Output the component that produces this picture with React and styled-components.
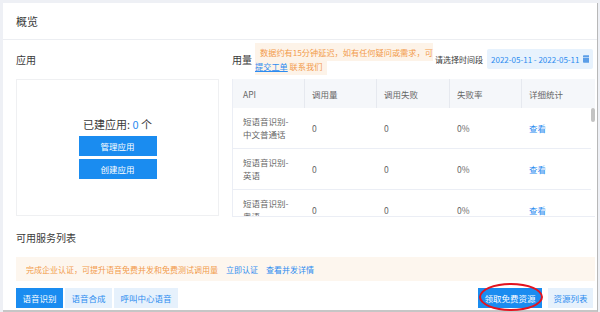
import React from "react";
import styled, { createGlobalStyle, css } from "styled-components";

const rows = [
  { api: "短语音识别-中文普通话", calls: 0, fails: 0, rate: "0%" },
  { api: "短语音识别-英语", calls: 0, fails: 0, rate: "0%" },
  { api: "短语音识别-粤语", calls: 0, fails: 0, rate: "0%" }
];

const tabs = ["语音识别", "语音合成", "呼叫中心语音"];

export default function App() {
  return (
    <Page>
      <GlobalStyle />
      <Card>
        <Header>概览</Header>
        <Body>
          <TopGrid>
            <Column>
              <ColumnHead>
                <SectionTitle>应用</SectionTitle>
              </ColumnHead>
              <AppBox>
                <CountText>
                  已建应用: <Num>0</Num> 个
                </CountText>
                <PrimaryButton>管理应用</PrimaryButton>
                <PrimaryButton>创建应用</PrimaryButton>
              </AppBox>
            </Column>
            <Column>
              <ColumnHead>
                <SectionTitle>用量</SectionTitle>
                <NoticeWrap>
                  <Notice>
                    数据约有15分钟延迟，如有任何疑问或需求，可
                    <NoticeLink>提交工单</NoticeLink> 联系我们
                  </Notice>
                </NoticeWrap>
                <Spacer />
                <PickLabel>请选择时间段</PickLabel>
                <DateBox>
                  2022-05-11 - 2022-05-11
                  <CalendarIcon viewBox="0 0 7 8">
                    <rect x="0" y="0" width="7" height="8" rx="0.8" fill="#5b9ee8" />
                    <rect x="0" y="2" width="7" height="0.8" fill="#cfe3f8" />
                  </CalendarIcon>
                </DateBox>
              </ColumnHead>
              <TableWrap>
                <TableHead>
                  <HeadCell first>API</HeadCell>
                  <HeadCell>调用量</HeadCell>
                  <HeadCell>调用失败</HeadCell>
                  <HeadCell>失败率</HeadCell>
                  <HeadCell last>详细统计</HeadCell>
                </TableHead>
                <TableBody>
                  {rows.map((r, i) => (
                    <Row key={i}>
                      <Cell first>{r.api}</Cell>
                      <Cell>{r.calls}</Cell>
                      <Cell>{r.fails}</Cell>
                      <Cell>{r.rate}</Cell>
                      <Cell>
                        <Link>查看</Link>
                      </Cell>
                    </Row>
                  ))}
                </TableBody>
                <ScrollThumb />
              </TableWrap>
            </Column>
          </TopGrid>

          <ServicesTitle>可用服务列表</ServicesTitle>
          <Banner>
            完成企业认证，可提升语音免费并发和免费测试调用量
            <BannerLink>立即认证</BannerLink>
            <BannerLink>查看并发详情</BannerLink>
          </Banner>

          <TabRow>
            <Tabs>
              {tabs.map((t, i) => (
                <Tab key={t} active={i === 0}>
                  {t}
                </Tab>
              ))}
            </Tabs>
            <Actions>
              <Highlighted>
                <Tab active>领取免费资源</Tab>
                <RedRing />
              </Highlighted>
              <Tab narrow>资源列表</Tab>
            </Actions>
          </TabRow>
        </Body>
      </Card>
    </Page>
  );
}

const GlobalStyle = createGlobalStyle`
  html, body {
    margin: 0;
    padding: 0;
    background: #eef0f5;
  }
  body {
    font-family: "Noto Sans CJK SC", "Noto Sans", sans-serif;
    color: #333;
  }
`;

const Page = styled.div`
  width: 600px;
  height: 312px;
  padding: 3px 0 0 3px;
  box-sizing: border-box;
  overflow: hidden;
`;

const Card = styled.div`
  width: 594px;
  height: 307px;
  background: #fff;
  border-right: 1px solid #b8b8b8;
  border-bottom: 2px solid #c6c6c6;
  display: flex;
  flex-direction: column;
`;

const Header = styled.div`
  height: 36px;
  line-height: 36px;
  padding-left: 13px;
  font-size: 11px;
  color: #3a3a3a;
  border-bottom: 1px solid #eceef2;
`;

const Body = styled.div`
  padding: 0 2px 0 13px;
  display: flex;
  flex-direction: column;
`;

const TopGrid = styled.div`
  display: grid;
  grid-template-columns: 203px 1fr;
  column-gap: 13px;
  padding-top: 1px;
`;

const Column = styled.div`
  display: flex;
  flex-direction: column;
  min-width: 0;
`;

const ColumnHead = styled.div`
  height: 36px;
  margin-bottom: 2px;
  display: flex;
  align-items: center;
`;

const SectionTitle = styled.div`
  font-size: 10px;
  color: #3a3a3a;
  white-space: nowrap;
`;

const AppBox = styled.div`
  height: 137px;
  box-sizing: border-box;
  border: 1px solid #eff0f2;
  display: flex;
  flex-direction: column;
  align-items: center;
  justify-content: center;
`;

const CountText = styled.div`
  font-size: 11px;
  line-height: 14px;
  color: #3a3a3a;
  margin-bottom: 5px;
`;

const Num = styled.span`
  color: #2d8cf0;
`;

const PrimaryButton = styled.div`
  width: 78px;
  height: 20px;
  line-height: 20px;
  text-align: center;
  background: #1a8cf0;
  color: #fff;
  font-size: 8.5px;
  & + & {
    margin-top: 3px;
  }
`;

const NoticeWrap = styled.div`
  width: 180px;
  margin-left: 3px;
  font-size: 8.2px;
  line-height: 14px;
`;

const Notice = styled.span`
  background: #fdf3e8;
  color: #f29b4c;
  padding: 3px 5px;
`;

const NoticeLink = styled.span`
  color: #2d8cf0;
  text-decoration: underline;
`;

const Spacer = styled.div`
  flex: 1;
`;

const PickLabel = styled.div`
  font-size: 8px;
  color: #3a3a3a;
  margin-right: 4px;
  white-space: nowrap;
`;

const DateBox = styled.div`
  width: 106px;
  height: 20px;
  margin-right: 2px;
  box-sizing: border-box;
  padding: 0 4px;
  background: #e7f2fd;
  border-radius: 2px;
  color: #2d8cf0;
  font-size: 8px;
  display: flex;
  align-items: center;
  justify-content: space-between;
  white-space: nowrap;
`;

const CalendarIcon = styled.svg`
  width: 7px;
  height: 8px;
  margin-left: 3px;
`;

const TableWrap = styled.div`
  position: relative;
  height: 138px;
  overflow: hidden;
  border-left: 1px solid #ebeef5;
  border-bottom: 1px solid #ebeef5;
  box-sizing: border-box;
`;

const columns = css`
  display: grid;
  grid-template-columns: 72px 72px 73px 72px 1fr;
`;

const TableHead = styled.div`
  ${columns};
  height: 29px;
  background: #f5f7fa;
`;

const HeadCell = styled.div`
  display: flex;
  align-items: center;
  padding-left: ${p => (p.first ? "10px" : "7px")};
  font-size: 8.5px;
  color: #666;
  border-right: ${p => (p.last ? "none" : "1px solid #e6e9ef")};
`;

const TableBody = styled.div`
  margin-right: 4px;
`;

const Row = styled.div`
  ${columns};
  height: 41px;
  border-bottom: 1px solid #ebeef5;
  box-sizing: border-box;
`;

const Cell = styled.div`
  display: flex;
  align-items: center;
  padding: ${p => (p.first ? "0 10px 0 10px" : "0 0 0 7px")};
  font-size: 8.5px;
  line-height: 13px;
  color: #666;
`;

const Link = styled.span`
  color: #2d8cf0;
`;

const ScrollThumb = styled.div`
  position: absolute;
  right: 0;
  top: 29px;
  width: 4px;
  height: 14px;
  border-radius: 2px;
  background: #c3c3c3;
`;

const ServicesTitle = styled.div`
  margin-top: 12px;
  height: 18px;
  line-height: 18px;
  font-size: 10px;
  color: #3a3a3a;
`;

const Banner = styled.div`
  margin-top: 10px;
  height: 24px;
  padding-left: 10px;
  background: #fdf6ee;
  color: #f29b4c;
  font-size: 8px;
  display: flex;
  align-items: center;
  white-space: nowrap;
`;

const BannerLink = styled.span`
  color: #2d8cf0;
  margin-left: 8px;
`;

const TabRow = styled.div`
  margin-top: 7px;
  display: flex;
  justify-content: space-between;
  align-items: center;
`;

const Tabs = styled.div`
  display: flex;
  gap: 2px;
`;

const Actions = styled.div`
  display: flex;
  gap: 6px;
  margin-right: 2px;
`;

const Tab = styled.div`
  height: 20px;
  line-height: 20px;
  padding: 0 ${p => (p.narrow ? "5.5px" : "6.5px")};
  font-size: 8.5px;
  white-space: nowrap;
  background: ${p => (p.active ? "#1a8cf0" : "#e6f1fc")};
  color: ${p => (p.active ? "#fff" : "#2d8cf0")};
`;

const Highlighted = styled.div`
  position: relative;
`;

const RedRing = styled.div`
  position: absolute;
  left: 1px;
  right: -1px;
  top: -5px;
  bottom: -3px;
  border: 2px solid #e3131f;
  border-radius: 50%;
  box-sizing: border-box;
  pointer-events: none;
`;
